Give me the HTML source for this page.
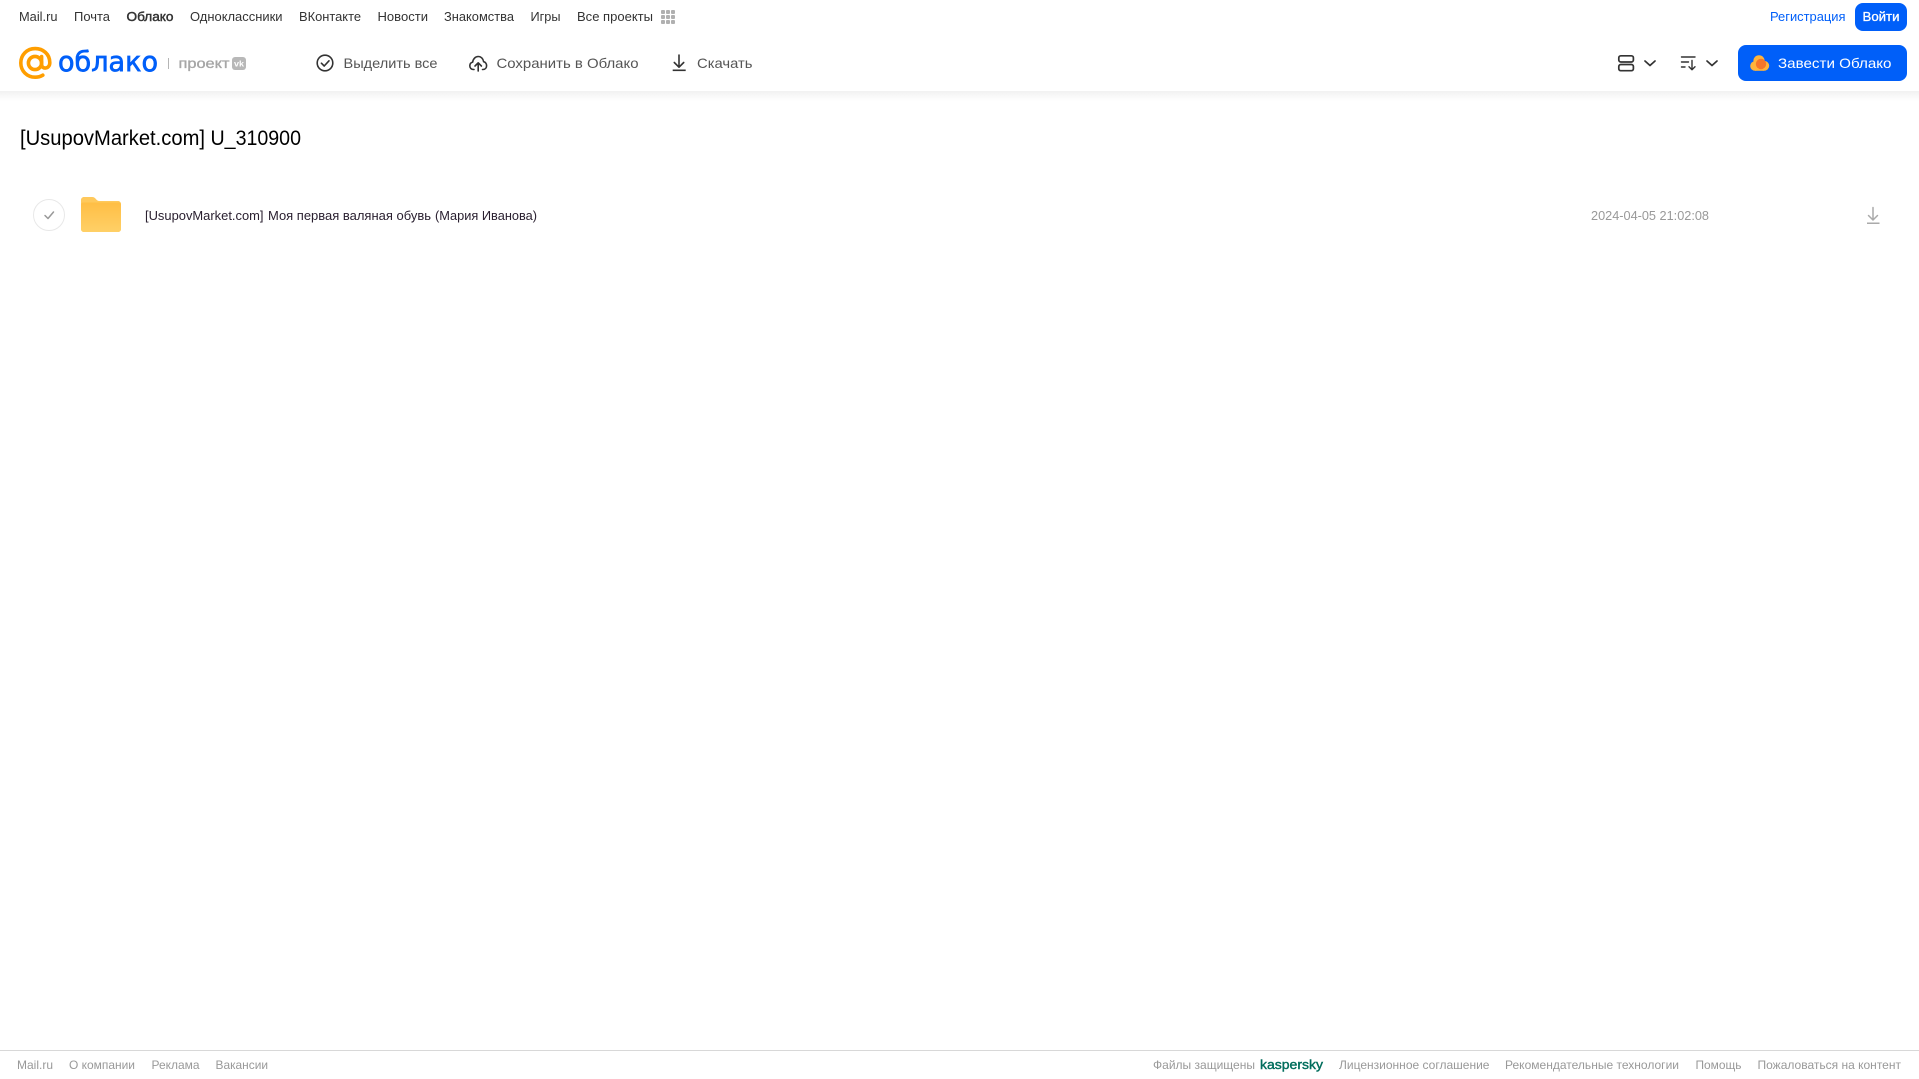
<!DOCTYPE html>
<html lang="ru">
<head>
<meta charset="utf-8">
<title>Облако</title>
<style>
html,body{margin:0;padding:0;background:#fff;width:1919px;height:1079px;overflow:hidden}
svg{display:block;position:absolute;left:0;top:0}
text{font-family:"Liberation Sans",sans-serif}
.n{font-size:13px;fill:#333}
.a{font-size:14px;fill:#555}
.f{font-size:12px;fill:#999}
</style>
</head>
<body>
<svg width="1919" height="1079" viewBox="0 0 1919 1079" xmlns="http://www.w3.org/2000/svg">
<defs>
<linearGradient id="sh" x1="0" y1="0" x2="0" y2="1"><stop offset="0" stop-color="#f1f1f1"/><stop offset="1" stop-color="#fff"/></linearGradient>
<linearGradient id="fo" x1="0" y1="0" x2="0" y2="1"><stop offset="0" stop-color="#ffbe45"/><stop offset="1" stop-color="#ffd067"/></linearGradient>
</defs>

<rect x="0" y="91" width="1919" height="10" fill="url(#sh)"/>

<!-- top nav -->
<text class="n" x="19" y="21" textLength="38.5" lengthAdjust="spacingAndGlyphs">Mail.ru</text>
<text class="n" x="74" y="21" textLength="36" lengthAdjust="spacingAndGlyphs">Почта</text>
<text class="n" x="126.5" y="21" textLength="47" lengthAdjust="spacingAndGlyphs" style="stroke:#333;stroke-width:.45">Облако</text>
<text class="n" x="190" y="21" textLength="92.5" lengthAdjust="spacingAndGlyphs">Одноклассники</text>
<text class="n" x="299" y="21" textLength="62" lengthAdjust="spacingAndGlyphs">ВКонтакте</text>
<text class="n" x="377.5" y="21" textLength="50.5" lengthAdjust="spacingAndGlyphs">Новости</text>
<text class="n" x="444" y="21" textLength="70" lengthAdjust="spacingAndGlyphs">Знакомства</text>
<text class="n" x="530.5" y="21" textLength="30" lengthAdjust="spacingAndGlyphs">Игры</text>
<text class="n" x="577" y="21" textLength="76" lengthAdjust="spacingAndGlyphs">Все проекты</text>
<g fill="#b0b0b0">
<rect x="661" y="10" width="4" height="4" rx="1"/><rect x="666" y="10" width="4" height="4" rx="1"/><rect x="671" y="10" width="4" height="4" rx="1"/>
<rect x="661" y="15" width="4" height="4" rx="1"/><rect x="666" y="15" width="4" height="4" rx="1"/><rect x="671" y="15" width="4" height="4" rx="1"/>
<rect x="661" y="20" width="4" height="4" rx="1"/><rect x="666" y="20" width="4" height="4" rx="1"/><rect x="671" y="20" width="4" height="4" rx="1"/>
</g>

<text x="1770" y="21" textLength="75.5" lengthAdjust="spacingAndGlyphs" style="font-size:13px;fill:#005ff9">Регистрация</text>
<rect x="1855" y="3" width="52" height="28" rx="8" fill="#005ff9"/>
<text x="1862.5" y="21" textLength="37" lengthAdjust="spacingAndGlyphs" style="font-size:13px;fill:#fff;stroke:#fff;stroke-width:.3">Войти</text>

<!-- logo -->
<g fill="none" stroke="#ff9e00" stroke-width="3.6" stroke-linecap="round">
<circle cx="35" cy="63" r="6.6"/>
<path d="M41.6 56.5V64.5C41.6 69.5 49.8 69.5 49.8 62.6C49.8 54 43 48.6 35.2 48.6C26.8 48.6 20.8 55 20.8 63C20.8 71 27 77.2 35.2 77.2C38.2 77.2 40.6 76.5 42.8 75.2"/>
</g>
<text x="58" y="71" textLength="100" lengthAdjust="spacingAndGlyphs" style="font-family:'DejaVu Sans',sans-serif;font-size:28px;fill:#005ff9;stroke:#005ff9;stroke-width:.7">облако</text>
<rect x="168" y="58" width="1" height="11" fill="#b5b5b5"/>
<text x="178.5" y="68" textLength="51" lengthAdjust="spacingAndGlyphs" style="font-size:14px;fill:#a6a6a6;stroke:#a6a6a6;stroke-width:.35">проект</text>
<rect x="232" y="57" width="14" height="13" rx="3" fill="#b8b8b8"/>
<text x="234" y="66.5" textLength="10" lengthAdjust="spacingAndGlyphs" style="font-size:8px;fill:#fff;font-weight:700">vk</text>

<!-- actions -->
<circle cx="325" cy="63" r="7.8" fill="none" stroke="#333" stroke-width="1.6"/>
<path d="M321.4 63.2L324.2 66L329 60.8" fill="none" stroke="#333" stroke-width="1.6" stroke-linecap="round" stroke-linejoin="round"/>
<text class="a" x="343.5" y="68" textLength="94" lengthAdjust="spacingAndGlyphs">Выделить все</text>

<path d="M474 69.5H473.5C471.2 69.5 469.8 67.8 469.8 65.8C469.8 63.9 471 62.5 472.7 62.1C473 59 475.3 56.5 478.2 56.5C481 56.5 483.2 58.7 483.6 61.7C485.4 62 486.6 63.8 486.6 65.6C486.6 67.8 485.2 69.5 483 69.5H482.5" fill="none" stroke="#333" stroke-width="1.6" stroke-linecap="round" stroke-linejoin="round"/>
<path d="M478.2 71V63.2M475 66L478.2 62.8L481.4 66" fill="none" stroke="#333" stroke-width="1.6" stroke-linecap="round" stroke-linejoin="round"/>
<text class="a" x="496.5" y="68" textLength="142" lengthAdjust="spacingAndGlyphs">Сохранить в Облако</text>

<path d="M679 55V67M674.3 62.5L679 67.2L683.7 62.5" fill="none" stroke="#333" stroke-width="1.6" stroke-linecap="round" stroke-linejoin="round"/>
<rect x="672.7" y="69.5" width="13" height="1.6" fill="#333"/>
<text class="a" x="697" y="68" textLength="55.5" lengthAdjust="spacingAndGlyphs">Скачать</text>

<!-- view -->
<g fill="none" stroke="#333" stroke-width="1.7">
<rect x="1618.8" y="55.8" width="14.6" height="6.2" rx="2"/>
<rect x="1618.8" y="64.5" width="14.6" height="6.2" rx="2"/>
</g>
<path d="M1645 61L1650 65.5L1655 61" fill="none" stroke="#333" stroke-width="1.7" stroke-linecap="round" stroke-linejoin="round"/>
<g fill="none" stroke="#333" stroke-width="1.4" stroke-linecap="round" stroke-linejoin="round">
<path d="M1681.5 57H1695M1681.5 62H1688.5M1681.5 67H1685"/>
<path d="M1692 60.5V69.5M1689 66.8L1692 69.8L1695 66.8"/>
</g>
<path d="M1707 61L1712 65.5L1717 61" fill="none" stroke="#333" stroke-width="1.7" stroke-linecap="round" stroke-linejoin="round"/>

<!-- CTA -->
<rect x="1738" y="45" width="169" height="36" rx="8" fill="#005ff9"/>
<g fill="#ffb43a">
<circle cx="1755" cy="66" r="4.8"/>
<circle cx="1759" cy="60.8" r="5.6"/>
<circle cx="1764.3" cy="65.8" r="4.9"/>
<rect x="1755" y="63" width="9" height="7.8"/>
</g>
<circle cx="1761" cy="64" r="5.2" fill="#f5762a"/>
<text x="1778" y="68" textLength="113.5" lengthAdjust="spacingAndGlyphs" style="font-size:14px;fill:#fff">Завести Облако</text>

<!-- title -->
<text x="20" y="145" textLength="185" lengthAdjust="spacingAndGlyphs" style="font-size:21.5px;fill:#000">[UsupovMarket.com]</text>
<text x="210.5" y="145" textLength="90.5" lengthAdjust="spacingAndGlyphs" style="font-size:21.5px;fill:#000">U_310900</text>

<!-- row -->
<circle cx="49" cy="215" r="15.5" fill="#fff" stroke="#e8e8e8" stroke-width="1"/>
<path d="M45 215.5L48 218.5L53.5 212" fill="none" stroke="#999" stroke-width="1.5" stroke-linecap="round" stroke-linejoin="round"/>
<path d="M81 200C81 198.3 82.3 197 84 197H92C94 197 95 198 96.2 199.4C97 200.4 97.8 201 99.2 201H118C119.7 201 121 202.3 121 204V229C121 230.7 119.7 232 118 232H84C82.3 232 81 230.7 81 229Z" fill="#ffc95c"/>
<path d="M81 204.5C81 203.4 81.9 202.5 83 202.5H119C120.1 202.5 121 203.4 121 204.5V229C121 230.7 119.7 232 118 232H84C82.3 232 81 230.7 81 229Z" fill="url(#fo)"/>
<text x="145" y="220" textLength="118.5" lengthAdjust="spacingAndGlyphs" style="font-size:13px;fill:#2a2030">[UsupovMarket.com]</text>
<text x="268" y="220" textLength="163" lengthAdjust="spacingAndGlyphs" style="font-size:13px;fill:#2a2030">Моя первая валяная обувь</text>
<text x="435" y="220" textLength="102" lengthAdjust="spacingAndGlyphs" style="font-size:13px;fill:#2a2030">(Мария Иванова)</text>
<text x="1591" y="220" textLength="118" lengthAdjust="spacingAndGlyphs" style="font-size:13px;fill:#999">2024-04-05 21:02:08</text>
<path d="M1873 207.5V220M1868.5 215.5L1873 220L1877.5 215.5" fill="none" stroke="#aaa" stroke-width="1.5" stroke-linecap="round" stroke-linejoin="round"/>
<rect x="1867" y="222.5" width="12.5" height="1.5" fill="#aaa"/>

<!-- footer -->
<rect x="0" y="1050" width="1919" height="1" fill="#d8d8d8"/>
<text class="f" x="17" y="1069" textLength="36" lengthAdjust="spacingAndGlyphs">Mail.ru</text>
<text class="f" x="69" y="1069" textLength="66" lengthAdjust="spacingAndGlyphs">О компании</text>
<text class="f" x="151.5" y="1069" textLength="48" lengthAdjust="spacingAndGlyphs">Реклама</text>
<text class="f" x="215.5" y="1069" textLength="52.5" lengthAdjust="spacingAndGlyphs">Вакансии</text>
<text class="f" x="1153" y="1069" textLength="102" lengthAdjust="spacingAndGlyphs">Файлы защищены</text>
<text x="1260" y="1069" textLength="63" lengthAdjust="spacingAndGlyphs" style="font-size:13px;fill:#006d5c;stroke:#006d5c;stroke-width:.4">kaspersky</text>
<text class="f" x="1339" y="1069" textLength="150.5" lengthAdjust="spacingAndGlyphs">Лицензионное соглашение</text>
<text class="f" x="1505" y="1069" textLength="174" lengthAdjust="spacingAndGlyphs">Рекомендательные технологии</text>
<text class="f" x="1695.5" y="1069" textLength="46" lengthAdjust="spacingAndGlyphs">Помощь</text>
<text class="f" x="1757.5" y="1069" textLength="143.5" lengthAdjust="spacingAndGlyphs">Пожаловаться на контент</text>
</svg>
</body>
</html>
